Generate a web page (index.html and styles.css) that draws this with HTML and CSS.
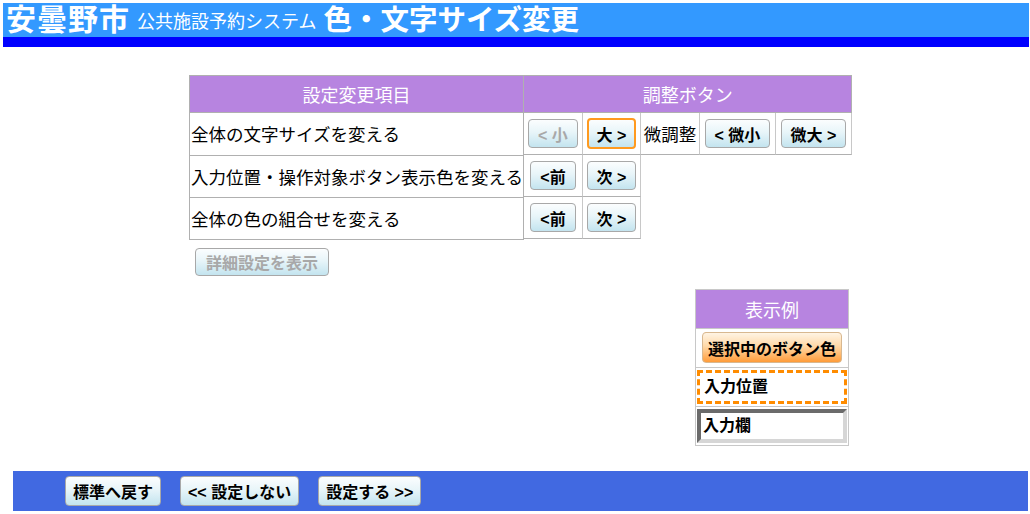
FILE: index.html
```html
<!DOCTYPE html>
<html lang="ja">
<head>
  <meta charset="UTF-8">
  <title>色・文字サイズ変更</title>
  <link rel="stylesheet" href="styles.css">
</head>
<body>
  <div class="header">
    <span class="city">安曇野市</span>
    <span class="system">公共施設予約システム</span>
    <span class="page-title">色・文字サイズ変更</span>
  </div>
  <div class="header-line"></div>

  <div class="main">
    <table class="setting">
      <tr>
        <th class="col-item">設定変更項目</th>
        <th class="col-btn">調整ボタン</th>
      </tr>
      <tr>
        <td class="item">全体の文字サイズを変える</td>
        <td class="btns">
          <div class="btn-cells">
            <span class="bc w59"><button class="btn" disabled>&lt; 小</button></span>
            <span class="bc w58"><button class="btn selected">大 &gt;</button></span>
            <span class="bc w59 label">微調整</span>
            <span class="bc w76"><button class="btn">&lt; 微小</button></span>
            <span class="bc w76"><button class="btn">微大 &gt;</button></span>
          </div>
        </td>
      </tr>
      <tr>
        <td class="item">入力位置・操作対象ボタン表示色を変える</td>
        <td class="btns">
          <div class="btn-cells">
            <span class="bc w59"><button class="btn">&lt;前</button></span>
            <span class="bc w58"><button class="btn">次 &gt;</button></span>
          </div>
        </td>
      </tr>
      <tr>
        <td class="item">全体の色の組合せを変える</td>
        <td class="btns">
          <div class="btn-cells">
            <span class="bc w59"><button class="btn">&lt;前</button></span>
            <span class="bc w58"><button class="btn">次 &gt;</button></span>
          </div>
        </td>
      </tr>
    </table>

    <button class="btn detail" disabled>詳細設定を表示</button>

    <table class="sample">
      <tr><th>表示例</th></tr>
      <tr><td><button class="btn orange">選択中のボタン色</button></td></tr>
      <tr><td><div class="focus-box">入力位置</div></td></tr>
      <tr><td><div class="input-box">入力欄</div></td></tr>
    </table>
  </div>

  <div class="footer">
    <button class="btn foot">標準へ戻す</button>
    <button class="btn foot">&lt;&lt; 設定しない</button>
    <button class="btn foot">設定する &gt;&gt;</button>
  </div>
</body>
</html>
```

FILE: styles.css
```css
body {
  margin: 0;
  padding: 0;
  background-color: #fff;
  font-family: "Liberation Sans", "Noto Sans CJK JP", sans-serif;
  color: #000;
}

.header {
  margin: 3px 1px 0 3px;
  height: 34px;
  padding-left: 3px;
  background-color: #3399ff;
  color: #fff;
  white-space: nowrap;
  display: flex;
  align-items: center;
  overflow: hidden;
}

.header .city {
  font-size: 30px;
  font-weight: bold;
  letter-spacing: 1px;
  line-height: 34px;
}

.header .system {
  font-size: 18px;
  margin-left: 7px;
  line-height: 34px;
  padding-top: 4px;
}

.header .page-title {
  font-size: 28.5px;
  font-weight: bold;
  margin-left: 7px;
  line-height: 34px;
}

.header-line {
  margin: 0 1px 0 3px;
  height: 10px;
  background-color: #0000ff;
}

.main {
  padding: 28px 0 0 189px;
  width: 663px;
}

/* settings table */
.setting {
  border-collapse: collapse;
  border-spacing: 0;
}

.setting th {
  background-color: #b784e0;
  color: #fff;
  font-weight: normal;
  font-size: 18px;
  height: 36px;
  padding: 0;
  border: 1px solid #b0b0b0;
}

.setting .col-item {
  width: 333px;
}

.setting .col-btn {
  width: 327px;
}

.setting td.item {
  border: 1px solid #b0b0b0;
  font-size: 17.5px;
  height: 41px;
  padding: 0 0 0 1px;
  white-space: nowrap;
}

.setting td.btns {
  padding: 0;
  vertical-align: top;
  border: none;
}

.btn-cells {
  display: flex;
  height: 42px;
}

.bc {
  display: flex;
  align-items: center;
  justify-content: center;
  box-sizing: border-box;
  height: 42px;
  border-right: 1px solid #c8c8c8;
  border-bottom: 1px solid #b0b0b0;
}

.bc.w59 { width: 59px; }
.bc.w58 { width: 58px; }
.bc.w76 { width: 76px; }

.bc.label {
  font-size: 17.5px;
}

/* buttons */
.btn {
  font-family: "Liberation Sans", "Noto Sans CJK JP", sans-serif;
  font-size: 16px;
  font-weight: bold;
  color: #000;
  height: 29px;
  padding: 0 9px;
  border: 1px solid #a8a8a8;
  border-radius: 4px;
  background: linear-gradient(to bottom, #fbfdfe 0%, #e8f5f9 45%, #c3e4ef 100%);
  white-space: nowrap;
  cursor: pointer;
}

.btn:disabled {
  color: #a8a8a8;
  cursor: default;
}

.btn.selected {
  border: 2px solid #ff9a1f;
  height: 31px;
  padding: 0 8px;
}

.detail {
  display: block;
  margin: 8px 0 0 6px;
  height: 28px;
  padding: 0 10px;
}

/* sample box */
.sample {
  margin: 13px 0 0 506px;
  width: 154px;
  border-collapse: collapse;
  border: 1px solid #c8c8c8;
}

.sample th {
  background-color: #b784e0;
  color: #fff;
  font-weight: normal;
  font-size: 18px;
  height: 38px;
  padding: 0;
}

.sample td {
  height: 38px;
  padding: 0 1px;
  border-top: 1px solid #c8c8c8;
  text-align: center;
}

.orange {
  height: 31px;
  width: 140px;
  padding: 0;
  border-color: #d8b890;
  background: linear-gradient(to bottom, #fff4e4 0%, #ffd9a8 45%, #ff9c3a 100%);
}

.focus-box {
  box-sizing: border-box;
  height: 34px;
  border: 3px dashed #ff8c00;
  font-size: 16px;
  font-weight: bold;
  text-align: left;
  padding-left: 4px;
  line-height: 28px;
}

.input-box {
  box-sizing: border-box;
  height: 34px;
  border-style: solid;
  border-width: 4px;
  border-color: #6b6b6b #d6d6d6 #d6d6d6 #6b6b6b;
  font-size: 16px;
  font-weight: bold;
  text-align: left;
  padding-left: 2px;
  line-height: 26px;
}

/* footer */
.footer {
  margin: 25px 2px 0 13px;
  height: 40px;
  box-sizing: border-box;
  padding: 5px 0 0 52px;
  background-color: #4169e1;
  display: flex;
  align-items: flex-start;
  gap: 19px;
}

.foot {
  padding: 0 7px;
  height: 30px;
}
```
